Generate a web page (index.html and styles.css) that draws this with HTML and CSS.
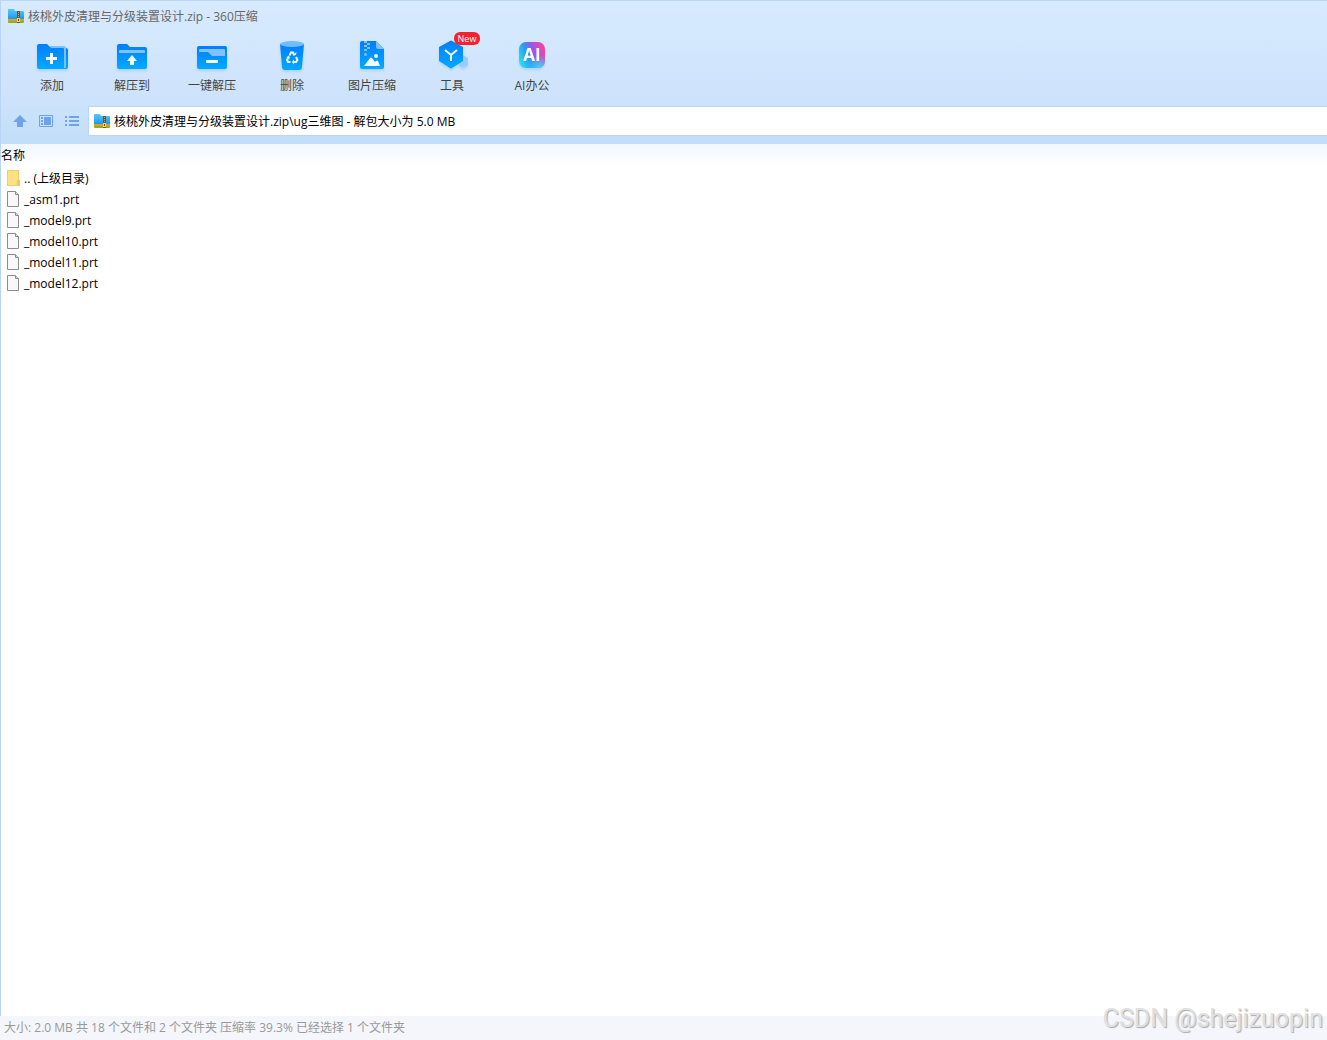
FILE: index.html
```html
<!DOCTYPE html>
<html lang="zh-CN">
<head>
    <meta charset="UTF-8">
    <meta name="viewport" content="width=device-width, initial-scale=1.0">
    <title>核桃外皮清理与分级装置设计.zip - 360压缩</title>
    <link rel="stylesheet" href="styles.css">
</head>
<body>
    <!-- Shared shapes and gradients -->
    <svg class="defs" width="0" height="0" aria-hidden="true">
        <defs>
            <linearGradient id="blue" x1="0" y1="0" x2="0" y2="1">
                <stop offset="0" stop-color="#007dff"/>
                <stop offset="1" stop-color="#00aaff"/>
            </linearGradient>
            <linearGradient id="folder-blue" x1="0" y1="0" x2="0" y2="1">
                <stop offset="0" stop-color="#5cc5fa"/>
                <stop offset="1" stop-color="#159ced"/>
            </linearGradient>
            <linearGradient id="ai" x1="0" y1="0.7" x2="1" y2="0.3">
                <stop offset="0" stop-color="#25e0ef"/>
                <stop offset="0.35" stop-color="#269bf5"/>
                <stop offset="0.6" stop-color="#9a55ee"/>
                <stop offset="1" stop-color="#f8449a"/>
            </linearGradient>
            <radialGradient id="ai-glow" cx="0.8" cy="1" r="0.5">
                <stop offset="0" stop-color="#35ddf5"/>
                <stop offset="1" stop-color="#35ddf5" stop-opacity="0"/>
            </radialGradient>
            <symbol id="zip" viewBox="0 0 16 16">
                <path d="M0 2q0-1 1-1h5l1 2h7q2 0 2 1v7H0z" fill="url(#folder-blue)"/>
                <path d="M0 11h16v2H0z" fill="#fa9418"/>
                <path d="M0 13h16v1q0 1-1 1H1q-1 0-1-1z" fill="#78b82a"/>
                <path d="M9 3h3v12H9z" fill="#8b4a1b"/>
                <path d="M10 4h1v1h-1zM10 6h1v1h-1zM10 8h1v1h-1z" fill="#d89b55"/>
                <path d="M9 10h3v4H9z" fill="#ffd86b"/>
                <path d="M10 11h1v2h-1z" fill="#70400f"/>
            </symbol>
            <symbol id="file" viewBox="0 0 13 16">
                <path d="M0.500 0.500h8l3 3v12h-11z" fill="#f8f8f8" stroke="#8c8c8c"/>
                <path d="M8.500 0.500v3h3" fill="#dcdcdc" stroke="#8c8c8c"/>
            </symbol>
        </defs>
    </svg>

    <header class="header">
        <div class="title-bar">
            <svg class="zip-icon" viewBox="0 0 16 16"><use href="#zip"/></svg>
            <h1>核桃外皮清理与分级装置设计.zip - 360压缩</h1>
        </div>

        <div class="toolbar">
            <button class="tool" type="button">
                <svg viewBox="0 0 34 34">
                    <path d="M30 8h1q2 0 2 2v17q0 2-2 2h-1z" fill="url(#blue)"/>
                    <path d="M2 6q0-2 2-2h8l3 3h14q1 0 1 1v21H4q-2 0-2-2z" fill="url(#blue)"/>
                    <path d="M14 6h15q2 0 2 2v19q0 1-1 1h-1V9q0-1-1-1H16z" fill="#80c2ff"/>
                    <path d="M15 13h3v4h4v3h-4v4h-3v-4h-4v-3h4z" fill="#f2faff"/>
                </svg>
                <span>添加</span>
            </button>
            <button class="tool" type="button">
                <svg viewBox="0 0 34 34">
                    <path d="M2 6q0-2 2-2h8l3 3h15q2 0 2 2v18q0 2-2 2H4q-2 0-2-2z" fill="url(#blue)"/>
                    <path d="M4 13v-2q0-1 1-1h24q1 0 1 1v2z" fill="#80c2ff"/>
                    <path d="M17 15l5 6h-3v4h-4v-4h-3z" fill="#f2faff"/>
                </svg>
                <span>解压到</span>
            </button>
            <button class="tool" type="button">
                <svg viewBox="0 0 34 34">
                    <rect x="2" y="6" width="30" height="23" rx="2" fill="url(#blue)"/>
                    <path d="M4 12v-2q0-1 1-1h24q1 0 1 1v6H17l-4-4z" fill="#80c2ff"/>
                    <rect x="11" y="20" width="12" height="3" rx="1" fill="#f2faff"/>
                </svg>
                <span>一键解压</span>
            </button>
            <button class="tool" type="button">
                <svg viewBox="0 0 34 34">
                    <path d="M5 4h24l-2 23q0 3-3 3H10q-3 0-3-3z" fill="url(#blue)"/>
                    <ellipse cx="17" cy="4" rx="12" ry="3" fill="#70bdff"/>
                    <g fill="none" stroke="#f2faff" stroke-width="2">
                        <path d="M14.500 15.500l1.500-3h2l1.500 3"/>
                        <path d="M21 17l1.500 3-1.500 2h-3"/>
                        <path d="M15.500 22H13l-1-2 1.500-3"/>
                    </g>
                    <path d="M18 15h3l.5-3zM19 19.500v5L17 22zM11.500 17.500l2.500-2 1 3z" fill="#f2faff"/>
                </svg>
                <span>删除</span>
            </button>
            <button class="tool" type="button">
                <svg viewBox="0 0 34 34">
                    <path d="M5 3q0-2 2-2h14l8 8v18q0 2-2 2H7q-2 0-2-2z" fill="url(#blue)"/>
                    <path d="M21 1l8 8h-6q-2 0-2-2z" fill="#80c2ff"/>
                    <path d="M9 1h3v2H9zM12 3h3v2h-3zM9 5h3v2H9zM12 7h3v2h-3zM9 9h3v2H9z" fill="#80c2ff"/>
                    <circle cx="10.500" cy="14.500" r="1.500" fill="#80c2ff"/>
                    <circle cx="21" cy="16" r="2" fill="#f2faff"/>
                    <path d="M9 26l6-8q1-1 2 0l3 4 1-1q1-1 2 0l2 5z" fill="#f2faff"/>
                </svg>
                <span>图片压缩</span>
            </button>
            <button class="tool" type="button">
                <svg viewBox="0 0 34 34">
                    <path d="M28 15l5 3v7l-5 3-5-3v-7z" fill="#96cdfd"/>
                    <path d="M15 1q1-1 2 0l11 6v14l-11 7q-1 1-2 0L4 21V7z" fill="url(#blue)"/>
                    <path d="M10 10l6 5 6-5M16 15v6" fill="none" stroke="#f2faff" stroke-width="2"/>
                </svg>
                <em class="badge">New</em>
                <span>工具</span>
            </button>
            <button class="tool" type="button">
                <svg viewBox="0 0 34 34">
                    <rect x="4" y="2" width="26" height="26" rx="7" fill="url(#ai)"/>
                    <rect x="4" y="2" width="26" height="26" rx="7" fill="url(#ai-glow)"/>
                    <text class="ai-text" x="17" y="21" text-anchor="middle">AI</text>
                </svg>
                <span>AI办公</span>
            </button>
        </div>

        <div class="nav-bar">
            <div class="nav-buttons">
                <button type="button" aria-label="向上">
                    <svg viewBox="0 0 16 16"><path d="M8 2l7 7h-4v5H5V9H1z" fill="#6ca3ea"/></svg>
                </button>
                <button type="button" aria-label="视图">
                    <svg viewBox="0 0 16 16">
                        <path d="M1.500 2.500h13v11h-13z" fill="none" stroke="#6ca3ea"/>
                        <path d="M3 4h2v2H3zM3 7h2v2H3zM3 10h2v2H3zM6 4h7v8H6z" fill="#6ca3ea"/>
                    </svg>
                </button>
                <button type="button" aria-label="列表">
                    <svg viewBox="0 0 16 16"><path d="M1 3h2v2H1zM1 7h2v2H1zM1 11h2v2H1zM5 3h10v2H5zM5 7h10v2H5zM5 11h10v2H5z" fill="#6ca3ea"/></svg>
                </button>
            </div>
            <label class="address">
                <svg class="zip-icon" viewBox="0 0 16 16"><use href="#zip"/></svg>
                <input type="text" aria-label="地址" value="核桃外皮清理与分级装置设计.zip\ug三维图 - 解包大小为 5.0 MB">
            </label>
        </div>
    </header>

    <main class="content">
        <table class="file-list">
            <thead>
                <tr><th>名称</th></tr>
            </thead>
            <tbody>
                <tr><td><div class="entry">
                    <svg viewBox="0 0 13 16">
                        <path d="M0 0h12v9l1 1v6H0z" fill="#ffe184"/>
                        <path d="M12 9v7h-2v-6z" fill="#f1c95a"/>
                        <path d="M.5.5h11v9l1 1v5H.5z" fill="none" stroke="#efcd69"/>
                    </svg>
                    <a href="#">.. (上级目录)</a>
                </div></td></tr>
                <tr><td><div class="entry"><svg viewBox="0 0 13 16"><use href="#file"/></svg><a href="#">_asm1.prt</a></div></td></tr>
                <tr><td><div class="entry"><svg viewBox="0 0 13 16"><use href="#file"/></svg><a href="#">_model9.prt</a></div></td></tr>
                <tr><td><div class="entry"><svg viewBox="0 0 13 16"><use href="#file"/></svg><a href="#">_model10.prt</a></div></td></tr>
                <tr><td><div class="entry"><svg viewBox="0 0 13 16"><use href="#file"/></svg><a href="#">_model11.prt</a></div></td></tr>
                <tr><td><div class="entry"><svg viewBox="0 0 13 16"><use href="#file"/></svg><a href="#">_model12.prt</a></div></td></tr>
            </tbody>
        </table>
    </main>

    <footer class="status-bar">大小: 2.0 MB 共 18 个文件和 2 个文件夹 压缩率 39.3% 已经选择 1 个文件夹</footer>
    <div class="watermark">CSDN @shejizuopin</div>
</body>
</html>
```
FILE: styles.css
```css
* {
    box-sizing: border-box;
}

body {
    position: relative;
    display: flex;
    flex-direction: column;
    min-height: 100vh;
    margin: 0;
    background-color: #fff;
    color: #000;
    font-family: "Open Sans", "Noto Sans CJK SC", sans-serif;
    font-size: 12px;
    line-height: 16px;
}

button, input {
    padding: 0;
    border: none;
    background: none;
    color: inherit;
    font: inherit;
}

button {
    cursor: pointer;
}

svg {
    display: block;
    flex-shrink: 0;
}

.defs {
    position: absolute;
}

.header {
    border-top: 1px solid #bcd9f4;
    border-left: 1px solid #b9d5f6;
    background: linear-gradient(#d7eaff, #cde3fb 70%, #c3def9 96%);
}

.title-bar {
    display: flex;
    align-items: flex-start;
    gap: 4px;
    height: 31px;
    padding: 7px 7px 0;
}

.title-bar h1 {
    margin: 0;
    color: #666;
    font-size: 12px;
    font-weight: normal;
    line-height: 18px;
}

.zip-icon {
    width: 16px;
    height: 16px;
}

.toolbar {
    display: flex;
    padding: 8px 0 0 11px;
}

.tool {
    position: relative;
    display: flex;
    flex-direction: column;
    align-items: center;
    gap: 4px;
    width: 80px;
    color: #444;
}

.tool svg {
    width: 34px;
    height: 34px;
    filter: drop-shadow(0 2px 1px rgba(60, 140, 230, 0.2));
}

.ai-text {
    fill: #fff;
    font-size: 17px;
    font-weight: bold;
}

.badge {
    position: absolute;
    top: -8px;
    left: 42px;
    width: 26px;
    border-radius: 6px;
    background-color: #f5222d;
    color: #fff;
    font-size: 9px;
    font-style: normal;
    line-height: 13px;
}

.nav-bar {
    display: flex;
    align-items: center;
    gap: 8px;
    padding: 12px 0 8px 11px;
}

.nav-buttons {
    display: flex;
    gap: 10px;
}

.nav-buttons svg {
    width: 16px;
    height: 16px;
}

.address {
    display: flex;
    flex: 1;
    align-items: center;
    gap: 4px;
    height: 30px;
    padding-left: 5px;
    border: 1px solid #b9d7f5;
    border-right: none;
    background-color: #fff;
}

.address input {
    flex: 1;
    min-width: 0;
    height: 18px;
    outline: none;
}

.content {
    flex: 1;
    border-left: 1px solid #b9d5f6;
    background: linear-gradient(#f2f8ff, #fff 24px);
}

.file-list {
    width: 100%;
    border-collapse: collapse;
}

.file-list th {
    height: 24px;
    padding: 0;
    font-weight: normal;
    text-align: left;
}

.file-list td {
    height: 21px;
    padding: 0 0 0 6px;
}

.entry {
    display: flex;
    align-items: flex-start;
    gap: 4px;
    line-height: 18px;
}

.entry svg {
    width: 13px;
    height: 16px;
}

.entry a {
    color: inherit;
    text-decoration: none;
}

.status-bar {
    padding: 4px;
    background-color: #f4f6fb;
    color: #999;
}

.watermark {
    position: absolute;
    right: 4px;
    bottom: 5px;
    color: #e0e0e2;
    font-family: Roboto, sans-serif;
    font-size: 25px;
    line-height: 32px;
    text-shadow: 1px 1px 1px #aaa;
}
```
